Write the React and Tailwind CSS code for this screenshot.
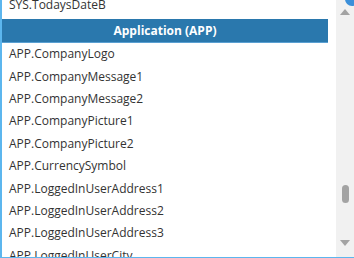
const rows = [
  'APP.CompanyLogo',
  'APP.CompanyMessage1',
  'APP.CompanyMessage2',
  'APP.CompanyPicture1',
  'APP.CompanyPicture2',
  'APP.CurrencySymbol',
  'APP.LoggedInUserAddress1',
  'APP.LoggedInUserAddress2',
  'APP.LoggedInUserAddress3',
  'APP.LoggedInUserCity',
]

function ScrollBar() {
  return (
    <div className="w-[18px] h-full bg-[#f1f1f1] flex flex-col items-center">
      <div className="mt-[9px] w-0 h-0 border-x-[5px] border-x-transparent border-b-[6px] border-b-[#a3a3a3]" />
      <div className="mt-[170px] w-[7px] h-[18px] rounded-full bg-[#a3a3a3]" />
      <div className="mt-[37px] w-0 h-0 border-x-[5px] border-x-transparent border-t-[6px] border-t-[#a3a3a3]" />
    </div>
  )
}

export default function App() {
  return (
    <div
      className="relative w-[354px] h-[258px] overflow-hidden bg-white flex border-l-2 border-b border-[#5cb6ee]"
      style={{ fontFamily: '"Open Sans", sans-serif' }}
    >
      <div className="flex-1 flex flex-col pr-[8px] -mt-[6px]">
        <div className="h-[22px] shrink-0 flex items-center pl-[7px] text-[12px] text-[#333]">SYS.TodaysDateB</div>
        <div className="mt-[3px] h-[24px] shrink-0 flex items-center justify-center bg-[#2a78ad] border-b border-[#5aa0d2] text-white text-[12px] font-bold">
          Application (APP)
        </div>
        {rows.map(r => (
          <div key={r} className="h-[22.4px] shrink-0 flex items-center pl-[7px] text-[12px] text-[#333]">
            {r}
          </div>
        ))}
      </div>
      <ScrollBar />
      <div className="absolute -top-[8px] -right-[5px] w-[14px] h-[14px] rounded-full bg-[#3b8fd9]" />
    </div>
  )
}
